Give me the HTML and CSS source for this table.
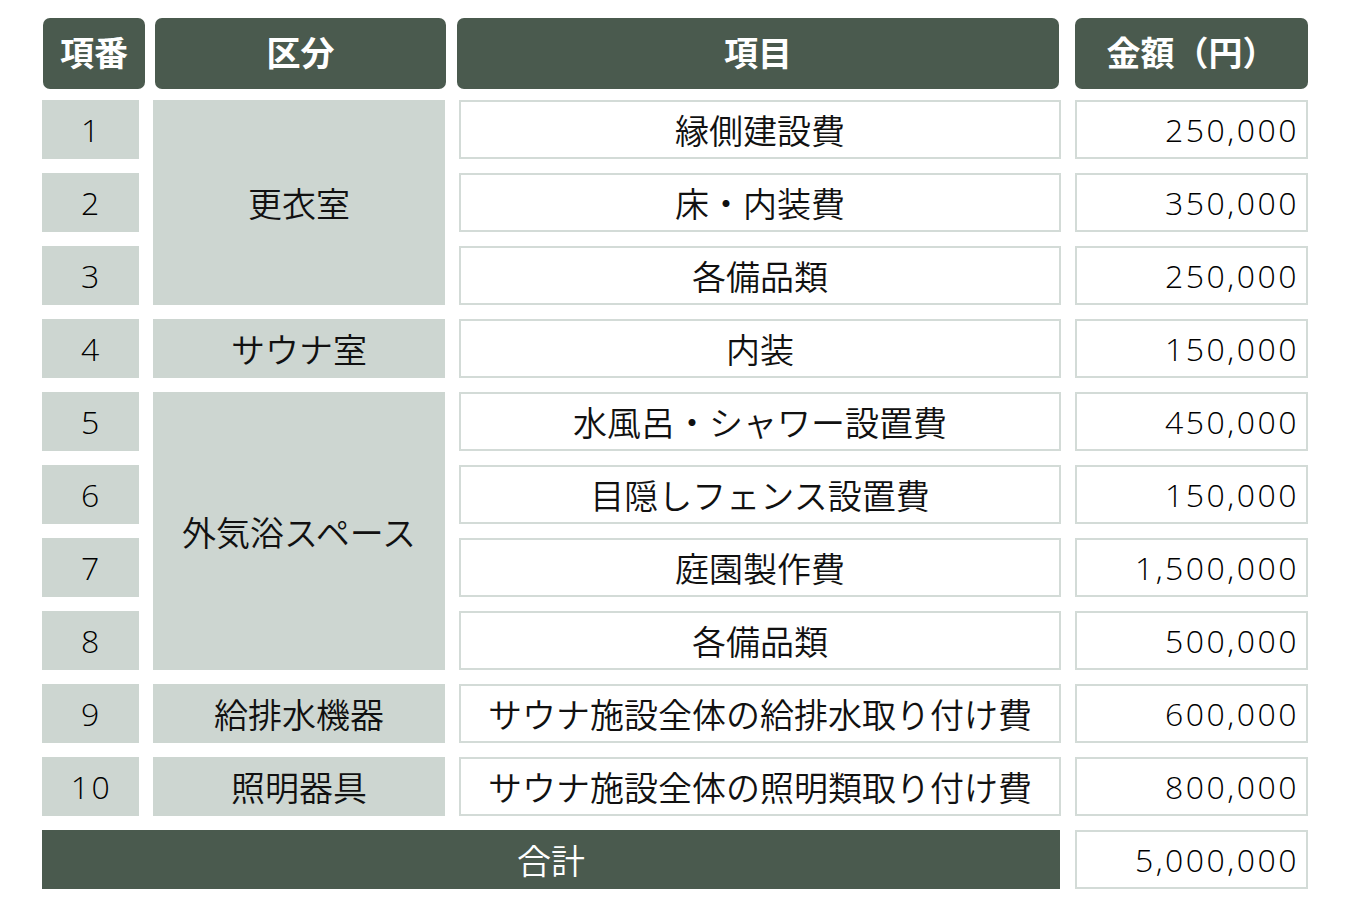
FILE: index.html
```html
<!DOCTYPE html>
<html lang="ja">
<head>
<meta charset="utf-8">
<title>費用内訳</title>
<link rel="stylesheet" href="styles.css">
</head>
<body>
<div class="table">
  <div class="head">
    <div class="th th-no">項番</div>
    <div class="th th-cat">区分</div>
    <div class="th th-item">項目</div>
    <div class="th th-amt">金額（円）</div>
  </div>
  <div class="body">
    <div class="no r1">1</div>
    <div class="cat r1 span3">更衣室</div>
    <div class="item r1">縁側建設費</div>
    <div class="amt r1">250,000</div>

    <div class="no r2">2</div>
    <div class="item r2">床・内装費</div>
    <div class="amt r2">350,000</div>

    <div class="no r3">3</div>
    <div class="item r3">各備品類</div>
    <div class="amt r3">250,000</div>

    <div class="no r4">4</div>
    <div class="cat r4">サウナ室</div>
    <div class="item r4">内装</div>
    <div class="amt r4">150,000</div>

    <div class="no r5">5</div>
    <div class="cat r5 span4">外気浴スペース</div>
    <div class="item r5">水風呂・シャワー設置費</div>
    <div class="amt r5">450,000</div>

    <div class="no r6">6</div>
    <div class="item r6">目隠しフェンス設置費</div>
    <div class="amt r6">150,000</div>

    <div class="no r7">7</div>
    <div class="item r7">庭園製作費</div>
    <div class="amt r7">1,500,000</div>

    <div class="no r8">8</div>
    <div class="item r8">各備品類</div>
    <div class="amt r8">500,000</div>

    <div class="no r9">9</div>
    <div class="cat r9">給排水機器</div>
    <div class="item r9">サウナ施設全体の給排水取り付け費</div>
    <div class="amt r9">600,000</div>

    <div class="no r10">10</div>
    <div class="cat r10">照明器具</div>
    <div class="item r10">サウナ施設全体の照明類取り付け費</div>
    <div class="amt r10">800,000</div>

    <div class="total-label r11">合計</div>
    <div class="amt r11">5,000,000</div>
  </div>
</div>
</body>
</html>
```

FILE: styles.css
```css
html, body {
  margin: 0;
  padding: 0;
  background: #ffffff;
}

body {
  font-family: "Open Sans", "Noto Sans CJK JP", sans-serif;
  color: #111111;
  text-spacing-trim: space-all;
}

.table {
  padding: 18px 0 0 42px;
  width: 1266px;
}

.head,
.body {
  display: grid;
  grid-template-columns: 97px 292px 602px 233px;
  column-gap: 14px;
}

.head {
  margin-bottom: 11px;
}

.th {
  height: 71px;
  box-sizing: border-box;
  padding-bottom: 5px;
  background: #4a5a4e;
  color: #ffffff;
  border-radius: 7px;
  font-family: "Noto Sans CJK JP", sans-serif;
  font-weight: 700;
  font-size: 34px;
  display: flex;
  align-items: center;
  justify-content: center;
}

.th-no { margin: 0 -6px 0 1px; }
.th-cat { margin: 0 -1px 0 2px; }
.th-item { margin: 0 2px 0 -2px; }
.th-amt { margin: 0; }

.body {
  grid-template-rows: repeat(11, 59px);
  row-gap: 14px;
}

.no,
.cat,
.item,
.amt,
.total-label {
  display: flex;
  align-items: center;
  box-sizing: border-box;
}

.cat,
.item,
.total-label {
  font-family: "Noto Sans CJK JP", sans-serif;
  font-size: 34px;
  font-weight: 350;
}

.no,
.amt {
  font-size: 32px;
  font-weight: 350;
  letter-spacing: 2.5px;
  color: #000000;
}

.no,
.cat {
  background: #cdd6d1;
  justify-content: center;
}

.no {
  grid-column: 1;
  padding-left: 2px;
}
.cat { grid-column: 2; }

.item {
  grid-column: 3;
  justify-content: center;
  background: #ffffff;
  border: 2px solid #d3dbd7;
}

.amt {
  grid-column: 4;
  justify-content: flex-end;
  padding-right: 7px;
  background: #ffffff;
  border: 2px solid #d3dbd7;
}

.total-label {
  grid-column: 1 / 4;
  margin-right: 1px;
  justify-content: center;
  background: #4a5a4e;
  color: #ffffff;
}

.r1 { grid-row: 1; }
.r2 { grid-row: 2; }
.r3 { grid-row: 3; }
.r4 { grid-row: 4; }
.r5 { grid-row: 5; }
.r6 { grid-row: 6; }
.r7 { grid-row: 7; }
.r8 { grid-row: 8; }
.r9 { grid-row: 9; }
.r10 { grid-row: 10; }
.r11 { grid-row: 11; }

.cat.span3 { grid-row: 1 / span 3; }
.cat.span4 { grid-row: 5 / span 4; }
```
